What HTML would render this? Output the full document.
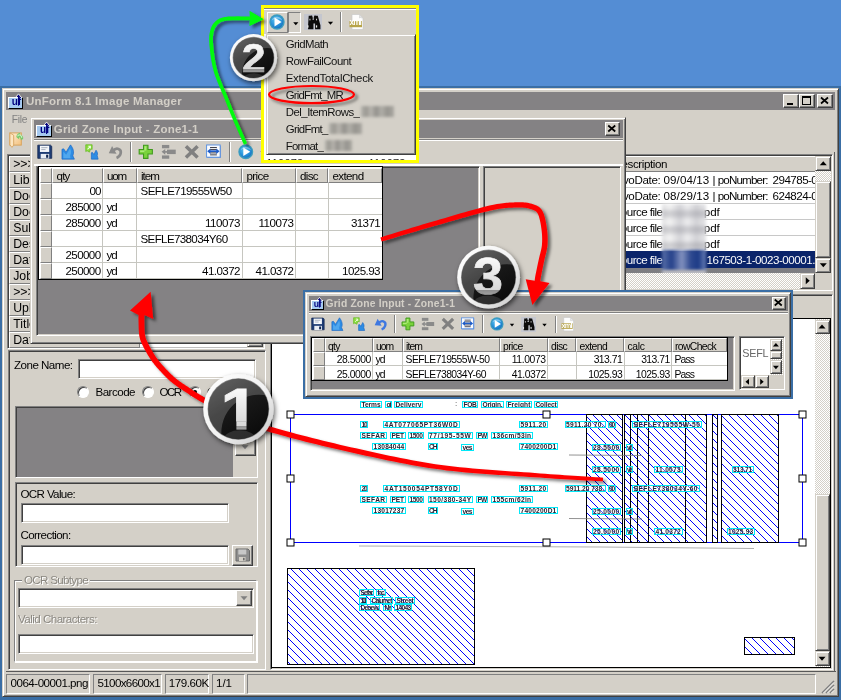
<!DOCTYPE html><html><head><meta charset="utf-8"><title>UnForm 8.1 Image Manager</title><style>
*{box-sizing:border-box;margin:0;padding:0}
html,body{width:841px;height:700px;overflow:hidden}
body{background:#548DD4;font-family:"Liberation Sans",sans-serif;font-size:11px;color:#000;position:relative}
.a{position:absolute}
.t{position:absolute;white-space:nowrap;line-height:1;opacity:.99}
.face{background:#D4D0C8}
.win{background:#D4D0C8;border:1px solid;border-color:#D4D0C8 #404040 #404040 #D4D0C8;box-shadow:inset 1px 1px 0 #fff,inset -1px -1px 0 #808080}
.btn{background:#D4D0C8;border:1px solid;border-color:#fff #404040 #404040 #fff;box-shadow:inset -1px -1px 0 #808080}
.sunk{border:1px solid;border-color:#808080 #fff #fff #808080;box-shadow:inset 1px 1px 0 #404040,inset -1px -1px 0 #D4D0C8}
.sunk1{border:1px solid;border-color:#808080 #fff #fff #808080}
.etch{border:1px solid;border-color:#808080 #fff #fff #808080;box-shadow:inset 1px 1px 0 #fff,1px 1px 0 #fff}
.cap{background:#848284}
.hd{background:#D4D0C8;border:1px solid;border-color:#fff #808080 #808080 #fff}
.dith{background-color:#D4D0C8;background-image:linear-gradient(45deg,#fff 25%,transparent 25%,transparent 75%,#fff 75%),linear-gradient(45deg,#fff 25%,transparent 25%,transparent 75%,#fff 75%);background-size:2px 2px;background-position:0 0,1px 1px}
.w{position:absolute;border:1px solid #00e8f8;font-size:6.6px;line-height:5px;height:7px;white-space:nowrap;overflow:hidden;color:#223;text-align:center;font-weight:bold;background:rgba(255,255,255,.35);opacity:.99}
.blur{position:absolute;filter:blur(1.6px)}
svg{position:absolute;overflow:visible}
</style></head><body><div id="root" style="position:absolute;left:0;top:0;width:841px;height:700px">
<svg width="0" height="0" style="left:0;top:0"><defs><radialGradient id="pg" cx=".4" cy=".35" r=".75"><stop offset="0" stop-color="#5CC4F0"/><stop offset=".6" stop-color="#2590D8"/><stop offset="1" stop-color="#1668B8"/></radialGradient></defs></svg>
<div class="a " style="left:0px;top:86px;width:841px;height:614px;background:#3A6EA5;"></div>
<div class="a win" style="left:2px;top:88px;width:837px;height:609px;"></div>
<div class="a cap" style="left:6px;top:92px;width:829px;height:18px;"></div>
<div class="a " style="left:8.1px;top:97.1px;width:15.4px;height:11.5px;background:#A6CAF0;border:1px solid;border-color:#fff #000 #000 #fff;"></div>
<div class="t" style="left:11.8px;top:97.13px;font-size:10px;letter-spacing:-0.07px;font-weight:bold;color:#000080;">uf</div>
<svg style="left:0;top:0" width="841" height="700"><path d="M15.5,97.6 L18.5,93.9 L21.5,97.6" fill="none" stroke="#fff" stroke-width="0.9"/><path d="M18.5,105.7 V95.9" stroke="#000080" stroke-width="1.1"/><polygon points="16.7,96.9 20.3,96.9 18.5,94.5" fill="#000080"/></svg>
<div class="t" style="left:26px;top:95.87px;font-size:11.5px;letter-spacing:0.24px;font-weight:bold;color:#D4D0C8;">UnForm 8.1 Image Manager</div>
<div class="a btn" style="left:783px;top:94px;width:16px;height:14px;"></div>
<div class="a " style="left:787px;top:103px;width:6px;height:2px;background:#000;"></div>
<div class="a btn" style="left:799px;top:94px;width:16px;height:14px;"></div>
<div class="a " style="left:802px;top:96px;width:9px;height:9px;border:1px solid #000;border-top-width:2px;"></div>
<div class="a btn" style="left:817px;top:94px;width:16px;height:14px;"></div>
<svg style="left:0;top:0" width="841" height="700"><path d="M821,97.5 l7,6 M828,97.5 l-7,6" stroke="#000" stroke-width="1.7"/></svg>
<div class="t" style="left:11.8px;top:115.47px;font-size:10.2px;letter-spacing:-0.26px;color:#808080;">File</div>
<svg style="left:9.4px;top:132.4px" width="16" height="17" viewBox="0 0 16 17"><defs><linearGradient id="fg" x1="0" y1="0" x2="1" y2="1"><stop offset="0" stop-color="#FFF1DA"/><stop offset="1" stop-color="#F3C07C"/></linearGradient></defs><rect x="0.9" y="0.9" width="11.4" height="12.2" fill="url(#fg)" stroke="#D7A35C" stroke-width="1"/><path d="M0.9,0.9 L0.9,12.9 L3,15.4 L4.7,13.1 L4.7,3.2 L3.1,2.2 Z" fill="#FCE6C2" stroke="#D7A35C" stroke-width=".9"/><path d="M7.3,4.9 C7.6,2 10,0.9 11.3,0.7 L11,2.4 C13.2,2.9 14.8,4.9 14.1,6.9 L11.7,8.3 C11.9,6.7 11.2,5.4 10,5.3 L10.3,7.6 Z" fill="#79C96A"/><path d="M8.6,4.4 C9.2,3 10.4,2.6 11.4,3.2 C12.4,3.8 12.9,4.9 12.7,5.9" fill="none" stroke="#C9F0C0" stroke-width="1.1"/></svg>
<div class="a sunk" style="left:7px;top:154px;width:258px;height:195px;background:#fff;overflow:hidden;"></div>
<div class="a hd" style="left:9px;top:156px;width:131px;height:16px;"></div>
<div class="a " style="left:140px;top:171px;width:107px;height:1px;background:#C0C0C0;"></div>
<div class="t" style="left:13.2px;top:158.39px;font-size:12.3px;">&gt;&gt;&gt;</div>
<div class="a hd" style="left:9px;top:172px;width:131px;height:16px;"></div>
<div class="a " style="left:140px;top:187px;width:107px;height:1px;background:#C0C0C0;"></div>
<div class="t" style="left:13.2px;top:174.39px;font-size:12.3px;">Libr</div>
<div class="a hd" style="left:9px;top:188px;width:131px;height:16px;"></div>
<div class="a " style="left:140px;top:203px;width:107px;height:1px;background:#C0C0C0;"></div>
<div class="t" style="left:13.2px;top:190.39px;font-size:12.3px;">Doc</div>
<div class="a hd" style="left:9px;top:204px;width:131px;height:16px;"></div>
<div class="a " style="left:140px;top:219px;width:107px;height:1px;background:#C0C0C0;"></div>
<div class="t" style="left:13.2px;top:206.39px;font-size:12.3px;">Doc</div>
<div class="a hd" style="left:9px;top:220px;width:131px;height:16px;"></div>
<div class="a " style="left:140px;top:235px;width:107px;height:1px;background:#C0C0C0;"></div>
<div class="t" style="left:13.2px;top:222.39px;font-size:12.3px;">Sub</div>
<div class="a hd" style="left:9px;top:236px;width:131px;height:16px;"></div>
<div class="a " style="left:140px;top:251px;width:107px;height:1px;background:#C0C0C0;"></div>
<div class="t" style="left:13.2px;top:238.39px;font-size:12.3px;">Des</div>
<div class="a hd" style="left:9px;top:252px;width:131px;height:16px;"></div>
<div class="a " style="left:140px;top:267px;width:107px;height:1px;background:#C0C0C0;"></div>
<div class="t" style="left:13.2px;top:254.39px;font-size:12.3px;">Dat</div>
<div class="a hd" style="left:9px;top:268px;width:131px;height:16px;"></div>
<div class="a " style="left:140px;top:283px;width:107px;height:1px;background:#C0C0C0;"></div>
<div class="t" style="left:13.2px;top:270.39px;font-size:12.3px;">Job</div>
<div class="a hd" style="left:9px;top:284px;width:131px;height:16px;"></div>
<div class="a " style="left:140px;top:299px;width:107px;height:1px;background:#C0C0C0;"></div>
<div class="t" style="left:13.2px;top:286.39px;font-size:12.3px;">&gt;&gt;&gt;</div>
<div class="a hd" style="left:9px;top:300px;width:131px;height:16px;"></div>
<div class="a " style="left:140px;top:315px;width:107px;height:1px;background:#C0C0C0;"></div>
<div class="t" style="left:13.2px;top:302.39px;font-size:12.3px;">Upl</div>
<div class="a hd" style="left:9px;top:316px;width:131px;height:16px;"></div>
<div class="a " style="left:140px;top:331px;width:107px;height:1px;background:#C0C0C0;"></div>
<div class="t" style="left:13.2px;top:318.39px;font-size:12.3px;">Title</div>
<div class="a hd" style="left:9px;top:332px;width:131px;height:16px;"></div>
<div class="a " style="left:140px;top:347px;width:107px;height:1px;background:#C0C0C0;"></div>
<div class="t" style="left:13.2px;top:334.39px;font-size:12.3px;">Dat</div>
<div class="a dith" style="left:247px;top:156px;width:16px;height:191px;"></div>
<div class="a win" style="left:247px;top:331px;width:16px;height:16px;"></div>
<svg class="a" style="left:0;top:0" width="841" height="700"><polygon points="251.5,337.25 258.5,337.25 255,341.25" fill="#000"/></svg>
<div class="a sunk" style="left:560px;top:154px;width:273px;height:137px;background:#fff;"></div>
<div class="a hd" style="left:562px;top:156px;width:254px;height:15.5px;"></div>
<div class="t" style="left:613.5px;top:157.98px;font-size:11.6px;letter-spacing:-0.41px;">Description</div>
<div class="a " style="left:562px;top:186.5px;width:254px;height:1px;background:#C8C8C8;"></div>
<div class="a " style="left:562px;top:202.5px;width:254px;height:1px;background:#C8C8C8;"></div>
<div class="a " style="left:562px;top:218.5px;width:254px;height:1px;background:#C8C8C8;"></div>
<div class="a " style="left:562px;top:234.5px;width:254px;height:1px;background:#C8C8C8;"></div>
<div class="a " style="left:562px;top:250.5px;width:254px;height:1px;background:#C8C8C8;"></div>
<div class="a " style="left:562px;top:266.5px;width:254px;height:1px;background:#C8C8C8;"></div>
<div class="a " style="left:562px;top:251px;width:254px;height:17px;background:#0A246A;"></div>
<div class="a " style="left:562px;top:268px;width:254px;height:4.5px;background:#7E7E82;"></div>
<div class="a" style="left:562px;top:171px;width:253.4px;height:100px;overflow:hidden">
<div class="t" style="left:60.9px;top:2.78px;font-size:11.6px;letter-spacing:-0.35px;">voDate:</div>
<div class="t" style="left:101.6px;top:2.78px;font-size:11.6px;letter-spacing:0.06px;">09/04/13</div>
<div class="t" style="left:150.6px;top:2.78px;font-size:11.6px;">|</div>
<div class="t" style="left:155.7px;top:2.78px;font-size:11.6px;letter-spacing:-0.82px;">poNumber:</div>
<div class="t" style="left:210.6px;top:2.78px;font-size:11.6px;letter-spacing:-0.54px;">294785-01</div>
<div class="t" style="left:60.9px;top:18.78px;font-size:11.6px;letter-spacing:-0.35px;">voDate:</div>
<div class="t" style="left:101.6px;top:18.78px;font-size:11.6px;letter-spacing:0.06px;">08/29/13</div>
<div class="t" style="left:150.6px;top:18.78px;font-size:11.6px;">|</div>
<div class="t" style="left:155.7px;top:18.78px;font-size:11.6px;letter-spacing:-0.82px;">poNumber:</div>
<div class="t" style="left:210.6px;top:18.78px;font-size:11.6px;letter-spacing:-0.54px;">624824-01</div>
<div class="t" style="left:58.8px;top:34.78px;font-size:11.6px;letter-spacing:-0.53px;">ource file</div>
<div class="t" style="left:138.5px;top:34.78px;font-size:11.6px;">.pdf</div>
<div class="t" style="left:58.8px;top:50.78px;font-size:11.6px;letter-spacing:-0.53px;">ource file</div>
<div class="t" style="left:138.5px;top:50.78px;font-size:11.6px;">.pdf</div>
<div class="t" style="left:58.8px;top:66.78px;font-size:11.6px;letter-spacing:-0.53px;">ource file</div>
<div class="t" style="left:138.5px;top:66.78px;font-size:11.6px;">.pdf</div>
<div class="t" style="left:58.8px;top:82.78px;font-size:11.6px;letter-spacing:-0.53px;color:#fff;">ource file</div>
<div class="t" style="left:144.5px;top:82.78px;font-size:11.6px;letter-spacing:-0.48px;color:#fff;">167503-1-0023-00001.pdf</div>
</div>
<div class="blur" style="left:661.5px;top:204px;width:44px;height:47px;background:repeating-linear-gradient(180deg,rgba(255,255,255,.0) 0,rgba(255,255,255,.0) 4px,rgba(120,120,130,.28) 8px,rgba(120,120,130,.28) 11px,rgba(255,255,255,0) 16px),linear-gradient(90deg,#e2e2e4,#f2f2f2 18%,#d4d4d8 40%,#ececee 58%,#d2d2d6 78%,#e6e6e8)"></div>
<div class="blur" style="left:661.5px;top:250px;width:44px;height:21px;background:linear-gradient(90deg,#5a70a8,#24408a 22%,#8392bf 45%,#2f4a90 65%,#1c3a86 82%,#6a7fb5)"></div>
<div class="blur" style="left:661.5px;top:270px;width:44px;height:5px;background:#bcbcc2"></div>
<div class="a dith" style="left:815.4px;top:156px;width:15.8px;height:116.5px;"></div>
<div class="a win" style="left:815.4px;top:156px;width:15.8px;height:15px;"></div>
<svg class="a" style="left:0;top:0" width="841" height="700"><polygon points="819.8,165.25 826.8,165.25 823.3,161.25" fill="#000"/></svg>
<div class="a win" style="left:815.4px;top:181px;width:15.8px;height:76.5px;"></div>
<div class="a win" style="left:815.4px;top:257.5px;width:15.8px;height:15px;"></div>
<svg class="a" style="left:0;top:0" width="841" height="700"><polygon points="819.8,263.25 826.8,263.25 823.3,267.25" fill="#000"/></svg>
<div class="a dith" style="left:562px;top:272.5px;width:238px;height:16.5px;"></div>
<div class="a win" style="left:800px;top:272.5px;width:15px;height:16.5px;"></div>
<svg class="a" style="left:0;top:0" width="841" height="700"><polygon points="805.75,277.25 805.75,284.25 809.75,280.75" fill="#000"/></svg>
<div class="a face" style="left:815px;top:272.5px;width:16px;height:16.5px;"></div>
<div class="a sunk" style="left:8px;top:350px;width:258px;height:320px;background:#D4D0C8;"></div>
<div class="t" style="left:14px;top:359.48px;font-size:11.6px;letter-spacing:-0.53px;">Zone Name:</div>
<div class="a sunk" style="left:77.5px;top:359px;width:178px;height:20px;background:#fff;"></div>
<div class="a" style="left:77px;top:386px;width:12px;height:12px;border-radius:50%;background:#fff;border:1px solid;border-color:#808080 #fff #fff #808080;box-shadow:inset 1px 1px 0 #404040"></div>
<div class="a" style="left:141.5px;top:386px;width:12px;height:12px;border-radius:50%;background:#fff;border:1px solid;border-color:#808080 #fff #fff #808080;box-shadow:inset 1px 1px 0 #404040"></div>
<div class="a" style="left:189px;top:385.5px;width:12px;height:12px;border-radius:50%;background:#fff;border:1px solid;border-color:#808080 #fff #fff #808080;box-shadow:inset 1px 1px 0 #404040"></div>
<div class="a " style="left:193px;top:389.5px;width:4px;height:4px;background:#000;border-radius:50%;"></div>
<div class="t" style="left:95.5px;top:385.98px;font-size:11.6px;letter-spacing:-0.53px;">Barcode</div>
<div class="t" style="left:159.5px;top:385.98px;font-size:11.6px;letter-spacing:-1.59px;">OCR</div>
<div class="t" style="left:207px;top:385.98px;font-size:11.6px;">Grid</div>
<div class="a sunk" style="left:15px;top:406px;width:243px;height:72px;background:#D4D0C8;"></div>
<div class="a " style="left:17px;top:408px;width:215.5px;height:68.5px;background:#848284;"></div>
<div class="a btn" style="left:234.5px;top:437.5px;width:21px;height:18px;"></div>
<svg style="left:0;top:0" width="841" height="700"><polygon points="241.5,445.25 248.5,445.25 245,449.25" fill="#808080"/></svg>
<div class="a sunk" style="left:15px;top:482px;width:243px;height:85px;"></div>
<div class="t" style="left:20.5px;top:487.98px;font-size:11.6px;letter-spacing:-0.65px;">OCR Value:</div>
<div class="a sunk" style="left:20.5px;top:503px;width:208.5px;height:20px;background:#fff;"></div>
<div class="t" style="left:20.5px;top:528.98px;font-size:11.6px;letter-spacing:-0.61px;">Correction:</div>
<div class="a sunk" style="left:20.5px;top:545px;width:208.5px;height:20px;background:#fff;"></div>
<div class="a btn" style="left:232px;top:544.5px;width:21px;height:21px;"></div>
<svg style="left:235px;top:548px" width="15" height="14" viewBox="0 0 15 14"><path d="M1,1 h12 l1.5,1.5 v10.5 h-13.5z" fill="#8E8E8E" stroke="#6b6b6b" stroke-width="1"/><rect x="3.3" y="1.5" width="8" height="5" fill="#C8C8C8"/><rect x="4" y="9" width="6.5" height="4" fill="#D4D0C8"/><rect x="8" y="9.8" width="1.6" height="2.6" fill="#6b6b6b"/></svg>
<div class="a etch" style="left:14.2px;top:580px;width:243.3px;height:82px;"></div>
<div class="a face" style="left:22px;top:574px;width:68px;height:12px;"></div>
<div class="t" style="left:24px;top:574.48px;font-size:11.6px;letter-spacing:-0.69px;color:#8A8780;text-shadow:1px 1px 0 #fff;">OCR Subtype</div>
<div class="a sunk" style="left:18px;top:588px;width:236px;height:19.5px;background:#fff;"></div>
<div class="a btn" style="left:236px;top:590px;width:16px;height:15.5px;"></div>
<svg style="left:0;top:0" width="841" height="700"><polygon points="240.5,596.25 247.5,596.25 244,600.25" fill="#808080"/></svg>
<div class="t" style="left:18px;top:612.98px;font-size:11.6px;letter-spacing:-0.54px;color:#8A8780;text-shadow:1px 1px 0 #fff;">Valid Characters:</div>
<div class="a sunk" style="left:18px;top:634px;width:236px;height:19.5px;background:#fff;"></div>
<div class="a " style="left:6px;top:670.5px;width:830px;height:1.4px;background:#585858;"></div>
<div class="a " style="left:833.9px;top:152.3px;width:1.6px;height:519.6px;background:#606060;"></div>
<div class="a sunk1" style="left:6px;top:674px;width:84px;height:19.5px;"></div>
<div class="a sunk1" style="left:93px;top:674px;width:69px;height:19.5px;"></div>
<div class="a sunk1" style="left:164.5px;top:674px;width:44.5px;height:19.5px;"></div>
<div class="a sunk1" style="left:211.5px;top:674px;width:33.5px;height:19.5px;"></div>
<div class="a sunk1" style="left:247px;top:674px;width:569px;height:19.5px;"></div>
<div class="t" style="left:10.5px;top:677.38px;font-size:11.6px;letter-spacing:-0.5px;">0064-00001.png</div>
<div class="t" style="left:97.5px;top:677.38px;font-size:11.6px;letter-spacing:-0.65px;">5100x6600x1</div>
<div class="t" style="left:168.8px;top:677.38px;font-size:11.6px;letter-spacing:-0.46px;">179.60K</div>
<div class="t" style="left:216px;top:677.38px;font-size:11.6px;letter-spacing:-0.04px;">1/1</div>
<svg style="left:821px;top:680px" width="14" height="14"><path d="M1,13 L13,1 M5,13 L13,5 M9,13 L13,9" stroke="#808080" stroke-width="1.6"/><path d="M2.4,13 L13,2.4 M6.4,13 L13,6.4 M10.4,13 L13,10.4" stroke="#fff" stroke-width=".8"/></svg>
<div class="a sunk" style="left:270px;top:294px;width:563px;height:375.5px;background:#D4D0C8;"></div>
<div class="a " style="left:271px;top:318px;width:560px;height:350px;background:#fff;border:1px solid #000;border-left-width:1.5px;"></div>
<div class="a dith" style="left:814.5px;top:319px;width:15.5px;height:348px;"></div>
<div class="a win" style="left:814.5px;top:319.5px;width:15px;height:14.5px;"></div>
<svg class="a" style="left:0;top:0" width="841" height="700"><polygon points="818.5,328.5 825.5,328.5 822,324.5" fill="#000"/></svg>
<div class="a win" style="left:814.5px;top:494px;width:15px;height:157px;"></div>
<div class="a win" style="left:814.5px;top:651px;width:15px;height:15px;"></div>
<svg class="a" style="left:0;top:0" width="841" height="700"><polygon points="818.5,656.75 825.5,656.75 822,660.75" fill="#000"/></svg>
<svg style="left:0;top:0" width="841" height="700"><defs><pattern id="hat" width="8" height="8" patternUnits="userSpaceOnUse"><g shape-rendering="crispEdges" fill="#0000ff"><rect x="2" y="0" width="1" height="1"/><rect x="3" y="1" width="1" height="1"/><rect x="4" y="2" width="1" height="1"/><rect x="5" y="3" width="1" height="1"/><rect x="6" y="4" width="1" height="1"/><rect x="7" y="5" width="1" height="1"/><rect x="0" y="6" width="1" height="1"/><rect x="1" y="7" width="1" height="1"/></g></pattern></defs><rect x="290.5" y="414.5" width="512" height="128" fill="none" stroke="#0000ff" stroke-width="1"/><rect x="586.5" y="414.5" width="36" height="128" fill="url(#hat)" stroke="#000" stroke-width="1" shape-rendering="crispEdges"/><rect x="624.5" y="414.5" width="6" height="128" fill="url(#hat)" stroke="#000" stroke-width="1" shape-rendering="crispEdges"/><rect x="630.5" y="414.5" width="7" height="128" fill="url(#hat)" stroke="#000" stroke-width="1" shape-rendering="crispEdges"/><rect x="637.5" y="414.5" width="11" height="128" fill="url(#hat)" stroke="#000" stroke-width="1" shape-rendering="crispEdges"/><rect x="648.5" y="414.5" width="37" height="128" fill="url(#hat)" stroke="#000" stroke-width="1" shape-rendering="crispEdges"/><rect x="685.5" y="414.5" width="21" height="128" fill="url(#hat)" stroke="#000" stroke-width="1" shape-rendering="crispEdges"/><rect x="712.5" y="414.5" width="5" height="128" fill="url(#hat)" stroke="#000" stroke-width="1" shape-rendering="crispEdges"/><rect x="721.5" y="414.5" width="57" height="128" fill="url(#hat)" stroke="#000" stroke-width="1" shape-rendering="crispEdges"/><path d="M569,455 L642,455.5 M569,518.5 L642,519" stroke="#777" stroke-width=".8"/><path d="M359,546 L600,547 L754,548.5" stroke="#999" stroke-width=".8" fill="none"/><rect x="287.5" y="568.5" width="187" height="96" fill="url(#hat)" stroke="#000" stroke-width="1"/><rect x="744.5" y="637.5" width="50" height="17" fill="url(#hat)" stroke="#000" stroke-width="1"/><rect x="287" y="411" width="7" height="7" fill="#fff" stroke="#000" stroke-width="1"/><rect x="287" y="475" width="7" height="7" fill="#fff" stroke="#000" stroke-width="1"/><rect x="287" y="539" width="7" height="7" fill="#fff" stroke="#000" stroke-width="1"/><rect x="543" y="411" width="7" height="7" fill="#fff" stroke="#000" stroke-width="1"/><rect x="543" y="539" width="7" height="7" fill="#fff" stroke="#000" stroke-width="1"/><rect x="799" y="411" width="7" height="7" fill="#fff" stroke="#000" stroke-width="1"/><rect x="799" y="475" width="7" height="7" fill="#fff" stroke="#000" stroke-width="1"/><rect x="799" y="539" width="7" height="7" fill="#fff" stroke="#000" stroke-width="1"/></svg>
<div class="w" style="left:360px;top:400.5px;width:22px;letter-spacing:-0.06px">Terms</div>
<div class="w" style="left:385px;top:400.5px;width:7px;letter-spacing:-1.11px">of</div>
<div class="w" style="left:394px;top:400.5px;width:29px;letter-spacing:0.04px">Delivery</div>
<div class="t" style="left:455px;top:400.03px;font-size:8px;color:#333;">:</div>
<div class="w" style="left:462px;top:400.5px;width:16px;letter-spacing:-0.31px">FOB</div>
<div class="w" style="left:481px;top:400.5px;width:23px;letter-spacing:-0.18px">Origin,</div>
<div class="w" style="left:506px;top:400.5px;width:26px;letter-spacing:0.09px">Freight</div>
<div class="w" style="left:534px;top:400.5px;width:24px;letter-spacing:-0.14px">Collect</div>
<div class="w" style="left:360px;top:420.5px;width:8px;letter-spacing:-1.17px">10</div>
<div class="w" style="left:383px;top:420.5px;width:77px;letter-spacing:0.6px">4AT077065PT36W0D</div>
<div class="w" style="left:519px;top:420.5px;width:29px;letter-spacing:0.36px">5911.20</div>
<div class="w" style="left:360px;top:431.5px;width:27px;letter-spacing:0.4px">SEFAR</div>
<div class="w" style="left:390px;top:431.5px;width:15.5px;letter-spacing:-0.11px">PET</div>
<div class="w" style="left:408px;top:431.5px;width:16px;letter-spacing:-0.42px">1500</div>
<div class="w" style="left:427.5px;top:431.5px;width:45.5px;letter-spacing:0.65px">77/195-55W</div>
<div class="w" style="left:476px;top:431.5px;width:12px;letter-spacing:-0.82px">PW</div>
<div class="w" style="left:491px;top:431.5px;width:42px;letter-spacing:0.34px">136cm/53in</div>
<div class="w" style="left:372px;top:442.5px;width:34px;letter-spacing:0.2px">13084044</div>
<div class="w" style="left:427.5px;top:442.5px;width:10.5px;letter-spacing:-1.02px">CH</div>
<div class="w" style="left:461px;top:443.5px;width:12.5px;letter-spacing:-0.5px">yes</div>
<div class="w" style="left:519px;top:442.5px;width:39px;letter-spacing:0.21px">7400200D1</div>
<div class="w" style="left:564.5px;top:421px;width:41px;letter-spacing:0.32px">5911.20 70.</div>
<div class="w" style="left:607.5px;top:421px;width:8.2px;letter-spacing:-1.07px">00</div>
<div class="w" style="left:632px;top:421px;width:70px;letter-spacing:0.54px">SEFLE719555W-50</div>
<div class="w" style="left:591.5px;top:443.5px;width:29.5px;letter-spacing:0.38px">28.5000</div>
<div class="w" style="left:625.5px;top:443.5px;width:7.5px;letter-spacing:-1.6px">yd</div>
<div class="w" style="left:591.5px;top:465.5px;width:29.5px;letter-spacing:0.38px">28.5000</div>
<div class="w" style="left:625.5px;top:465.5px;width:7.5px;letter-spacing:-1.6px">yd</div>
<div class="w" style="left:654px;top:465.5px;width:28.5px;letter-spacing:0.29px">11.0073</div>
<div class="w" style="left:731.5px;top:465.5px;width:22px;letter-spacing:-0.2px">313.71</div>
<div class="w" style="left:360px;top:484.5px;width:8px;letter-spacing:-1.17px">20</div>
<div class="w" style="left:383px;top:484.5px;width:77px;letter-spacing:0.71px">4AT150054PT58Y0D</div>
<div class="w" style="left:519px;top:484.5px;width:29px;letter-spacing:0.36px">5911.20</div>
<div class="w" style="left:360px;top:495.5px;width:27px;letter-spacing:0.4px">SEFAR</div>
<div class="w" style="left:390px;top:495.5px;width:15.5px;letter-spacing:-0.11px">PET</div>
<div class="w" style="left:408px;top:495.5px;width:16px;letter-spacing:-0.42px">1500</div>
<div class="w" style="left:427.5px;top:495.5px;width:45.5px;letter-spacing:0.43px">150/380-34Y</div>
<div class="w" style="left:476px;top:495.5px;width:12px;letter-spacing:-0.82px">PW</div>
<div class="w" style="left:491px;top:495.5px;width:42px;letter-spacing:0.34px">155cm/62in</div>
<div class="w" style="left:372px;top:506.5px;width:34px;letter-spacing:0.2px">13017237</div>
<div class="w" style="left:427.5px;top:506.5px;width:10.5px;letter-spacing:-1.02px">CH</div>
<div class="w" style="left:461px;top:507.5px;width:12.5px;letter-spacing:-0.5px">yes</div>
<div class="w" style="left:519px;top:506.5px;width:39px;letter-spacing:0.21px">7400200D1</div>
<div class="w" style="left:564.5px;top:485px;width:41px;letter-spacing:-0.01px">5911.20 738.</div>
<div class="w" style="left:607.5px;top:485px;width:8.2px;letter-spacing:-1.07px">00</div>
<div class="w" style="left:632px;top:485px;width:67.5px;letter-spacing:0.51px">SEFLE738034Y-60</div>
<div class="w" style="left:591.5px;top:507.5px;width:29.5px;letter-spacing:0.38px">25.0000</div>
<div class="w" style="left:625.5px;top:507.5px;width:7.5px;letter-spacing:-1.6px">yd</div>
<div class="w" style="left:591.5px;top:527.5px;width:29.5px;letter-spacing:0.38px">25.0000</div>
<div class="w" style="left:625.5px;top:527.5px;width:7.5px;letter-spacing:-1.6px">yd</div>
<div class="w" style="left:654px;top:527.5px;width:28.5px;letter-spacing:0.23px">41.0372</div>
<div class="w" style="left:726.5px;top:527.5px;width:28.5px;letter-spacing:0.23px">1025.93</div>
<div class="w" style="left:359px;top:588.5px;width:15px;letter-spacing:-0.9px">Sefar</div>
<div class="w" style="left:376px;top:588.5px;width:9.5px;letter-spacing:-1.22px">Inc.</div>
<div class="w" style="left:359px;top:596.5px;width:8px;letter-spacing:-1.76px">111</div>
<div class="w" style="left:370px;top:596.5px;width:23px;letter-spacing:-0.86px">Calumet</div>
<div class="w" style="left:395px;top:596.5px;width:20px;letter-spacing:-0.28px">Street</div>
<div class="w" style="left:359px;top:604px;width:21px;letter-spacing:-0.81px">Depew,</div>
<div class="w" style="left:383px;top:604px;width:9px;letter-spacing:-1.58px">NY</div>
<div class="w" style="left:394px;top:604px;width:18px;letter-spacing:-0.67px">14043</div>
<div class="a win" style="left:30px;top:117px;width:596px;height:226.5px;"></div>
<div class="a cap" style="left:34px;top:120px;width:589px;height:18px;"></div>
<div class="a " style="left:36.2px;top:125.3px;width:15.4px;height:11.5px;background:#A6CAF0;border:1px solid;border-color:#fff #000 #000 #fff;"></div>
<div class="t" style="left:39.9px;top:125.33px;font-size:10px;letter-spacing:-0.07px;font-weight:bold;color:#000080;">uf</div>
<svg style="left:0;top:0" width="841" height="700"><path d="M43.6,125.8 L46.6,122.1 L49.6,125.8" fill="none" stroke="#fff" stroke-width="0.9"/><path d="M46.6,133.9 V124.1" stroke="#000080" stroke-width="1.1"/><polygon points="44.8,125.1 48.4,125.1 46.6,122.7" fill="#000080"/></svg>
<div class="t" style="left:53.8px;top:123.87px;font-size:11.5px;letter-spacing:0.2px;font-weight:bold;color:#D4D0C8;">Grid Zone Input - Zone1-1</div>
<div class="a btn" style="left:604.5px;top:122px;width:15.5px;height:14px;"></div>
<svg style="left:0;top:0" width="841" height="700"><path d="M608.25,125.5 l7,6 M615.25,125.5 l-7,6" stroke="#000" stroke-width="1.7"/></svg>
<div class="a " style="left:34px;top:139px;width:589px;height:2px;border-top:1px solid #808080;border-bottom:1px solid #fff;"></div>
<svg style="left:37px;top:144px" width="15.52" height="15.52" viewBox="0 0 16 16"><path d="M0.8,1.2 h13.2 l1.2,1.2 v12.4 h-14.4z" fill="#1E3C74" stroke="#122650" stroke-width=".8"/><rect x="3" y="1.8" width="9.6" height="6.4" fill="#F6F8FB"/><path d="M4.4,3.8 h6.4 M4.4,5.8 h4.4" stroke="#A4ACBC" stroke-width="1"/><rect x="3.8" y="10.2" width="8.8" height="4.8" fill="#E9EDF4"/><rect x="9.4" y="11" width="2.2" height="3.2" fill="#122650"/></svg>
<svg style="left:60.5px;top:144px" width="15.52" height="15.52" viewBox="0 0 16 16"><path d="M1,15.6 L1,5.4 L2.8,5 L5.2,8.4 L9.8,0.9 C12.8,4.6 13.8,8.6 12.2,12.2 L13.8,15.6 Z" fill="#2D8CE4" stroke="#1A66C4" stroke-width=".7"/><path d="M2.4,14.6 L2.4,8 L5.4,11 L9.4,4.4 C10.6,7 10.6,9.6 9.4,12 L9.8,14.6Z" fill="#6EBEF6" opacity=".55"/></svg>
<svg style="left:84px;top:144px" width="15.52" height="15.52" viewBox="0 0 16 16"><path d="M1.8,0.8 h6.6 v4.8 l-1.6,-.6 l-1.2,3.4 l-2.4,-1.4 l-1.4,.8z" fill="#8ADB3E" stroke="#62B81E" stroke-width=".7"/><path d="M3.6,5.6 L6.4,2.8 M4.4,2.4 h2.2 v2.2" stroke="#EFFFE0" stroke-width="1.1" fill="none"/><path d="M7.6,15.6 L7.6,9 L8.8,8.8 L10.2,10.8 L12.4,6.4 C13.8,8.2 14.4,10 13.6,12 L14.6,15.6 Z" fill="#2D8CE4" stroke="#1A66C4" stroke-width=".7"/></svg>
<svg style="left:108px;top:144px" width="15.52" height="15.52" viewBox="0 0 16 16"><path d="M5.4,7.2 C8.4,2.8 14.4,5 13,10 C12.4,12.2 10.8,13.6 8.8,14.4" fill="none" stroke="#8A8A8A" stroke-width="2.7"/><polygon points="0.8,9.6 8.8,10 4.2,2" fill="#8A8A8A"/></svg>
<svg style="left:138px;top:144px" width="15.52" height="15.52" viewBox="0 0 16 16"><path d="M5.7,1.2 h4.6 v4.5 h4.5 v4.6 h-4.5 v4.5 h-4.6 v-4.5 h-4.5 v-4.6 h4.5z" fill="#7AD23C" stroke="#3F9A1C" stroke-width="1.1"/><path d="M6.6,2.2 h2 v4.4 h-2z M2.2,6.6 h4.4 v1.6 h-4.4z" fill="#B8F088" opacity=".8"/></svg>
<svg style="left:161px;top:144px" width="15.52" height="15.52" viewBox="0 0 16 16"><rect x="1" y="1" width="7.5" height="3.4" fill="#8A8A8A"/><rect x="1" y="11.8" width="7.5" height="3.4" fill="#8A8A8A"/><rect x="6.2" y="5.8" width="9" height="4.6" fill="#8A8A8A"/><polygon points="0.6,8.1 4.4,5.2 4.4,11" fill="#8A8A8A"/><rect x="4" y="7.3" width="3" height="1.7" fill="#8A8A8A"/></svg>
<svg style="left:183.5px;top:144px" width="15.52" height="15.52" viewBox="0 0 16 16"><path d="M2,2.2 L14,13.8 M14,2.2 L2,13.8" stroke="#808080" stroke-width="3.6" stroke-linecap="butt"/></svg>
<svg style="left:205.7px;top:144px" width="15.52" height="15.52" viewBox="0 0 16 16"><rect x="1.2" y="1.6" width="14" height="12.6" fill="#4C82D6"/><rect x="0.6" y="1" width="14" height="12.6" fill="#FAFCFF" stroke="#5A90E0" stroke-width="1"/><path d="M4.2,3.6 h7 M4.2,5.6 h7 M4.2,9.2 h7 M4.2,11.2 h7" stroke="#3a3a44" stroke-width="1"/><path d="M3,7.4 h9.2" stroke="#1E5CC8" stroke-width="1.8"/><polygon points="1.2,7.4 4.6,4.6 4.6,10.2" fill="#1E5CC8"/><polygon points="14,7.4 10.6,4.6 10.6,10.2" fill="#1E5CC8"/></svg>
<svg style="left:238px;top:144px" width="15.52" height="15.52" viewBox="0 0 16 16"><circle cx="8" cy="8" r="7.7" fill="#3C9CBE"/><circle cx="8" cy="8" r="6.3" fill="url(#pg)"/><path d="M2.6,6.4 A5.8,5.8 0 0 1 13.4,6.4 A9,9 0 0 0 2.6,6.4Z" fill="#fff" opacity=".35"/><polygon points="5.5,3.6 12.6,8 5.5,12.4" fill="#fff"/></svg>
<div class="a " style="left:130px;top:142px;width:2px;height:20px;border-left:1px solid #808080;border-right:1px solid #fff;"></div>
<div class="a " style="left:229.4px;top:142px;width:2px;height:20px;border-left:1px solid #808080;border-right:1px solid #fff;"></div>
<svg style="left:0;top:0" width="841" height="700"><polygon points="260.5,151.25 265.5,151.25 263,154.25" fill="#000"/></svg>
<div class="a " style="left:34px;top:164px;width:589px;height:1.7px;background:#fff;"></div>
<div class="a sunk" style="left:35.5px;top:165.5px;width:444.5px;height:170.5px;background:#848284;"></div>
<div class="a sunk" style="left:482.8px;top:166px;width:138.7px;height:170px;background:#D4D0C8;"></div>
<div class="a " style="left:37.5px;top:166px;width:345.5px;height:114px;background:#fff;border:solid #000;border-width:1.5px 1px 1px 1.5px;"></div>
<div class="a hd" style="left:39.5px;top:167.5px;width:12.5px;height:15.5px;"></div>
<div class="a hd" style="left:52px;top:167.5px;width:50.5px;height:15.5px;"></div>
<div class="t" style="left:56.5px;top:170.28px;font-size:11.6px;letter-spacing:-0.82px;">qty</div>
<div class="a hd" style="left:102.5px;top:167.5px;width:34px;height:15.5px;"></div>
<div class="t" style="left:107px;top:170.28px;font-size:11.6px;letter-spacing:-1.19px;">uom</div>
<div class="a hd" style="left:136.5px;top:167.5px;width:105.5px;height:15.5px;"></div>
<div class="t" style="left:141px;top:170.28px;font-size:11.6px;letter-spacing:-0.98px;">item</div>
<div class="a hd" style="left:242px;top:167.5px;width:53.5px;height:15.5px;"></div>
<div class="t" style="left:246.5px;top:170.28px;font-size:11.6px;letter-spacing:-0.63px;">price</div>
<div class="a hd" style="left:295.5px;top:167.5px;width:32.5px;height:15.5px;"></div>
<div class="t" style="left:300px;top:170.28px;font-size:11.6px;letter-spacing:-0.66px;">disc</div>
<div class="a hd" style="left:328px;top:167.5px;width:54px;height:15.5px;"></div>
<div class="t" style="left:332.5px;top:170.28px;font-size:11.6px;letter-spacing:-0.64px;">extend</div>
<div class="a hd" style="left:39.5px;top:183px;width:12.5px;height:16px;"></div>
<div class="a " style="left:52px;top:198px;width:330px;height:1px;background:#C6C6C0;"></div>
<div class="t" style="left:89.5px;top:185.28px;font-size:11.6px;letter-spacing:-0.95px;">00</div>
<div class="t" style="left:140.5px;top:185.28px;font-size:11.6px;letter-spacing:-0.59px;">SEFLE719555W50</div>
<div class="a hd" style="left:39.5px;top:199px;width:12.5px;height:16px;"></div>
<div class="a " style="left:52px;top:214px;width:330px;height:1px;background:#C6C6C0;"></div>
<div class="t" style="left:65.5px;top:201.28px;font-size:11.6px;letter-spacing:-0.62px;">285000</div>
<div class="t" style="left:106.5px;top:201.28px;font-size:11.6px;letter-spacing:-1.13px;">yd</div>
<div class="a hd" style="left:39.5px;top:215px;width:12.5px;height:16px;"></div>
<div class="a " style="left:52px;top:230px;width:330px;height:1px;background:#C6C6C0;"></div>
<div class="t" style="left:65.5px;top:217.28px;font-size:11.6px;letter-spacing:-0.62px;">285000</div>
<div class="t" style="left:106.5px;top:217.28px;font-size:11.6px;letter-spacing:-1.13px;">yd</div>
<div class="t" style="left:205px;top:217.28px;font-size:11.6px;letter-spacing:-0.47px;">110073</div>
<div class="t" style="left:258.5px;top:217.28px;font-size:11.6px;letter-spacing:-0.47px;">110073</div>
<div class="t" style="left:351px;top:217.28px;font-size:11.6px;letter-spacing:-0.65px;">31371</div>
<div class="a hd" style="left:39.5px;top:231px;width:12.5px;height:16px;"></div>
<div class="a " style="left:52px;top:246px;width:330px;height:1px;background:#C6C6C0;"></div>
<div class="t" style="left:140.5px;top:233.28px;font-size:11.6px;letter-spacing:-0.65px;">SEFLE738034Y60</div>
<div class="a hd" style="left:39.5px;top:247px;width:12.5px;height:16px;"></div>
<div class="a " style="left:52px;top:262px;width:330px;height:1px;background:#C6C6C0;"></div>
<div class="t" style="left:65.5px;top:249.28px;font-size:11.6px;letter-spacing:-0.62px;">250000</div>
<div class="t" style="left:106.5px;top:249.28px;font-size:11.6px;letter-spacing:-1.13px;">yd</div>
<div class="a hd" style="left:39.5px;top:263px;width:12.5px;height:16px;"></div>
<div class="a " style="left:52px;top:278px;width:330px;height:1px;background:#C6C6C0;"></div>
<div class="t" style="left:65.5px;top:265.28px;font-size:11.6px;letter-spacing:-0.62px;">250000</div>
<div class="t" style="left:106.5px;top:265.28px;font-size:11.6px;letter-spacing:-1.13px;">yd</div>
<div class="t" style="left:202px;top:265.28px;font-size:11.6px;letter-spacing:-0.56px;">41.0372</div>
<div class="t" style="left:255.5px;top:265.28px;font-size:11.6px;letter-spacing:-0.56px;">41.0372</div>
<div class="t" style="left:342px;top:265.28px;font-size:11.6px;letter-spacing:-0.56px;">1025.93</div>
<div class="a " style="left:102px;top:183px;width:1px;height:96px;background:#C6C6C0;"></div>
<div class="a " style="left:136px;top:183px;width:1px;height:96px;background:#C6C6C0;"></div>
<div class="a " style="left:241.5px;top:183px;width:1px;height:96px;background:#C6C6C0;"></div>
<div class="a " style="left:295px;top:183px;width:1px;height:96px;background:#C6C6C0;"></div>
<div class="a " style="left:327.5px;top:183px;width:1px;height:96px;background:#C6C6C0;"></div>
<div class="a " style="left:303px;top:290px;width:490px;height:108.5px;background:#3A6EA5;"></div>
<div class="a win" style="left:305px;top:292px;width:486px;height:104.5px;"></div>
<div class="a cap" style="left:308.5px;top:295.5px;width:479.5px;height:15.5px;"></div>
<div class="a " style="left:310.5px;top:300.2px;width:13.24px;height:9.89px;background:#A6CAF0;border:1px solid;border-color:#fff #000 #000 #fff;"></div>
<div class="t" style="left:313.68px;top:300.2px;font-size:8.6px;letter-spacing:-0.06px;font-weight:bold;color:#000080;">uf</div>
<svg style="left:0;top:0" width="841" height="700"><path d="M316.86,300.63 L319.44,297.45 L322.02,300.63" fill="none" stroke="#fff" stroke-width="0.77"/><path d="M319.44,307.6 V299.17" stroke="#000080" stroke-width="0.95"/><polygon points="317.9,300.03 320.99,300.03 319.44,297.96" fill="#000080"/></svg>
<div class="t" style="left:325.5px;top:299.08px;font-size:10.3px;letter-spacing:0.17px;font-weight:bold;color:#D4D0C8;">Grid Zone Input - Zone1-1</div>
<div class="a btn" style="left:771.5px;top:296.5px;width:14.5px;height:13px;"></div>
<svg style="left:0;top:0" width="841" height="700"><path d="M774.75,299.5 l7,6 M781.75,299.5 l-7,6" stroke="#000" stroke-width="1.7"/></svg>
<div class="a " style="left:308.5px;top:312px;width:479.5px;height:2px;border-top:1px solid #808080;border-bottom:1px solid #fff;"></div>
<svg style="left:310.5px;top:317px" width="13.86" height="13.86" viewBox="0 0 16 16"><path d="M0.8,1.2 h13.2 l1.2,1.2 v12.4 h-14.4z" fill="#1E3C74" stroke="#122650" stroke-width=".8"/><rect x="3" y="1.8" width="9.6" height="6.4" fill="#F6F8FB"/><path d="M4.4,3.8 h6.4 M4.4,5.8 h4.4" stroke="#A4ACBC" stroke-width="1"/><rect x="3.8" y="10.2" width="8.8" height="4.8" fill="#E9EDF4"/><rect x="9.4" y="11" width="2.2" height="3.2" fill="#122650"/></svg>
<svg style="left:331.49px;top:317px" width="13.86" height="13.86" viewBox="0 0 16 16"><path d="M1,15.6 L1,5.4 L2.8,5 L5.2,8.4 L9.8,0.9 C12.8,4.6 13.8,8.6 12.2,12.2 L13.8,15.6 Z" fill="#2D8CE4" stroke="#1A66C4" stroke-width=".7"/><path d="M2.4,14.6 L2.4,8 L5.4,11 L9.4,4.4 C10.6,7 10.6,9.6 9.4,12 L9.8,14.6Z" fill="#6EBEF6" opacity=".55"/></svg>
<svg style="left:352.47px;top:317px" width="13.86" height="13.86" viewBox="0 0 16 16"><path d="M1.8,0.8 h6.6 v4.8 l-1.6,-.6 l-1.2,3.4 l-2.4,-1.4 l-1.4,.8z" fill="#8ADB3E" stroke="#62B81E" stroke-width=".7"/><path d="M3.6,5.6 L6.4,2.8 M4.4,2.4 h2.2 v2.2" stroke="#EFFFE0" stroke-width="1.1" fill="none"/><path d="M7.6,15.6 L7.6,9 L8.8,8.8 L10.2,10.8 L12.4,6.4 C13.8,8.2 14.4,10 13.6,12 L14.6,15.6 Z" fill="#2D8CE4" stroke="#1A66C4" stroke-width=".7"/></svg>
<svg style="left:373.9px;top:317px" width="13.86" height="13.86" viewBox="0 0 16 16"><path d="M5.4,7.2 C8.4,2.8 14.4,5 13,10 C12.4,12.2 10.8,13.6 8.8,14.4" fill="none" stroke="#3F78E0" stroke-width="2.7"/><polygon points="0.8,9.6 8.8,10 4.2,2" fill="#3F78E0"/></svg>
<svg style="left:400.69px;top:317px" width="13.86" height="13.86" viewBox="0 0 16 16"><path d="M5.7,1.2 h4.6 v4.5 h4.5 v4.6 h-4.5 v4.5 h-4.6 v-4.5 h-4.5 v-4.6 h4.5z" fill="#7AD23C" stroke="#3F9A1C" stroke-width="1.1"/><path d="M6.6,2.2 h2 v4.4 h-2z M2.2,6.6 h4.4 v1.6 h-4.4z" fill="#B8F088" opacity=".8"/></svg>
<svg style="left:421.23px;top:317px" width="13.86" height="13.86" viewBox="0 0 16 16"><rect x="1" y="1" width="7.5" height="3.4" fill="#8A8A8A"/><rect x="1" y="11.8" width="7.5" height="3.4" fill="#8A8A8A"/><rect x="6.2" y="5.8" width="9" height="4.6" fill="#8A8A8A"/><polygon points="0.6,8.1 4.4,5.2 4.4,11" fill="#8A8A8A"/><rect x="4" y="7.3" width="3" height="1.7" fill="#8A8A8A"/></svg>
<svg style="left:441.32px;top:317px" width="13.86" height="13.86" viewBox="0 0 16 16"><path d="M2,2.2 L14,13.8 M14,2.2 L2,13.8" stroke="#808080" stroke-width="3.6" stroke-linecap="butt"/></svg>
<svg style="left:461.15px;top:317px" width="13.86" height="13.86" viewBox="0 0 16 16"><rect x="1.2" y="1.6" width="14" height="12.6" fill="#4C82D6"/><rect x="0.6" y="1" width="14" height="12.6" fill="#FAFCFF" stroke="#5A90E0" stroke-width="1"/><path d="M4.2,3.6 h7 M4.2,5.6 h7 M4.2,9.2 h7 M4.2,11.2 h7" stroke="#3a3a44" stroke-width="1"/><path d="M3,7.4 h9.2" stroke="#1E5CC8" stroke-width="1.8"/><polygon points="1.2,7.4 4.6,4.6 4.6,10.2" fill="#1E5CC8"/><polygon points="14,7.4 10.6,4.6 10.6,10.2" fill="#1E5CC8"/></svg>
<svg style="left:489.99px;top:317px" width="13.86" height="13.86" viewBox="0 0 16 16"><circle cx="8" cy="8" r="7.7" fill="#3C9CBE"/><circle cx="8" cy="8" r="6.3" fill="url(#pg)"/><path d="M2.6,6.4 A5.8,5.8 0 0 1 13.4,6.4 A9,9 0 0 0 2.6,6.4Z" fill="#fff" opacity=".35"/><polygon points="5.5,3.6 12.6,8 5.5,12.4" fill="#fff"/></svg>
<div class="a " style="left:393.55px;top:315.21px;width:2px;height:17.86px;border-left:1px solid #808080;border-right:1px solid #fff;"></div>
<div class="a " style="left:482.31px;top:315.21px;width:2px;height:17.86px;border-left:1px solid #808080;border-right:1px solid #fff;"></div>
<svg style="left:0;top:0" width="841" height="700"><polygon points="509.8,323.7 514.2,323.7 512,326.4" fill="#000"/></svg>
<div class="a " style="left:520.5px;top:317px;width:15.5px;height:14.5px;background:#C6C8D0;"></div>
<svg style="left:521px;top:317.2px" width="14.4" height="14.4" viewBox="0 0 16 16"><path d="M3.6,1.6 h2.6 l1.2,4 h1.2 l1.2,-4 h2.6 l2.6,9.4 v3.8 h-5.2 v-5.6 h-1.6 v5.6 h-5.2 v-3.8z" fill="#0c0c0c"/><path d="M6.2,1.6 l.9,3 M9.8,1.6 l-.9,3" stroke="#0c0c0c" stroke-width="1.4"/><rect x="2.2" y="11" width="1.2" height="2.2" fill="#e8e8e8"/><rect x="10.6" y="11" width="1.2" height="2.2" fill="#e8e8e8"/><rect x="4.3" y="4.6" width="1" height="1.6" fill="#d0d0d0"/><rect x="10.7" y="4.6" width="1" height="1.6" fill="#d0d0d0"/></svg>
<svg style="left:0;top:0" width="841" height="700"><polygon points="542.3,323.7 546.7,323.7 544.5,326.4" fill="#000"/></svg>
<div class="a " style="left:554.5px;top:316px;width:2px;height:17px;border-left:1px solid #808080;border-right:1px solid #fff;"></div>
<svg style="left:560.5px;top:317px" width="14.4" height="14.4" viewBox="0 0 16 16"><path d="M3,0.5 h7.5 l3.5,3.5 v11.5 h-11z" fill="#FDFDFD" stroke="#C8C8C8" stroke-width=".7"/><path d="M10.5,0.5 v3.5 h3.5z" fill="#E4E4E4" stroke="#C8C8C8" stroke-width=".5"/><rect x="0.5" y="7" width="12.5" height="6.2" fill="#B7A44A"/></svg>
<div class="t" style="left:561.4px;top:321.62px;font-size:7.38px;letter-spacing:-0.79px;font-weight:bold;color:#fff;">xml</div>
<div class="a sunk" style="left:309.5px;top:335.5px;width:425px;height:55px;background:#848284;"></div>
<div class="a " style="left:311px;top:336.5px;width:417px;height:44.9px;background:#fff;border:solid #000;border-width:1.5px 1px 1px 1.5px;"></div>
<div class="a hd" style="left:313px;top:338px;width:11.5px;height:14px;"></div>
<div class="a hd" style="left:324.5px;top:338px;width:48px;height:14px;"></div>
<div class="t" style="left:328px;top:341.93px;font-size:10.36px;letter-spacing:-0.74px;">qty</div>
<div class="a hd" style="left:372.5px;top:338px;width:30px;height:14px;"></div>
<div class="t" style="left:376px;top:341.93px;font-size:10.36px;letter-spacing:-1.06px;">uom</div>
<div class="a hd" style="left:402.5px;top:338px;width:97px;height:14px;"></div>
<div class="t" style="left:406px;top:341.93px;font-size:10.36px;letter-spacing:-0.87px;">item</div>
<div class="a hd" style="left:499.5px;top:338px;width:48px;height:14px;"></div>
<div class="t" style="left:503px;top:341.93px;font-size:10.36px;letter-spacing:-0.56px;">price</div>
<div class="a hd" style="left:547.5px;top:338px;width:28.5px;height:14px;"></div>
<div class="t" style="left:551px;top:341.93px;font-size:10.36px;letter-spacing:-0.59px;">disc</div>
<div class="a hd" style="left:576px;top:338px;width:48px;height:14px;"></div>
<div class="t" style="left:579.5px;top:341.93px;font-size:10.36px;letter-spacing:-0.57px;">extend</div>
<div class="a hd" style="left:624px;top:338px;width:47.5px;height:14px;"></div>
<div class="t" style="left:627.5px;top:341.93px;font-size:10.36px;letter-spacing:-0.36px;">calc</div>
<div class="a hd" style="left:671.5px;top:338px;width:55.5px;height:14px;"></div>
<div class="t" style="left:675px;top:341.93px;font-size:10.36px;letter-spacing:-0.62px;">rowCheck</div>
<div class="a hd" style="left:313px;top:352px;width:11.5px;height:14.2px;"></div>
<div class="a " style="left:324.5px;top:365.2px;width:402.5px;height:1px;background:#C6C6C0;"></div>
<div class="t" style="left:336.78px;top:355.43px;font-size:10.36px;letter-spacing:-0.5px;">28.5000</div>
<div class="t" style="left:375.5px;top:355.43px;font-size:10.36px;letter-spacing:-1.01px;">yd</div>
<div class="t" style="left:405.5px;top:355.43px;font-size:10.36px;letter-spacing:-0.53px;">SEFLE719555W-50</div>
<div class="t" style="left:511.78px;top:355.43px;font-size:10.36px;letter-spacing:-0.39px;">11.0073</div>
<div class="t" style="left:593.64px;top:355.43px;font-size:10.36px;letter-spacing:-0.52px;">313.71</div>
<div class="t" style="left:641.14px;top:355.43px;font-size:10.36px;letter-spacing:-0.52px;">313.71</div>
<div class="t" style="left:674.5px;top:355.43px;font-size:10.36px;letter-spacing:-0.85px;">Pass</div>
<div class="a hd" style="left:313px;top:366.2px;width:11.5px;height:14.2px;"></div>
<div class="a " style="left:324.5px;top:379.4px;width:402.5px;height:1px;background:#C6C6C0;"></div>
<div class="t" style="left:336.78px;top:369.63px;font-size:10.36px;letter-spacing:-0.5px;">25.0000</div>
<div class="t" style="left:375.5px;top:369.63px;font-size:10.36px;letter-spacing:-1.01px;">yd</div>
<div class="t" style="left:405.5px;top:369.63px;font-size:10.36px;letter-spacing:-0.53px;">SEFLE738034Y-60</div>
<div class="t" style="left:511.78px;top:369.63px;font-size:10.36px;letter-spacing:-0.5px;">41.0372</div>
<div class="t" style="left:588.28px;top:369.63px;font-size:10.36px;letter-spacing:-0.5px;">1025.93</div>
<div class="t" style="left:635.78px;top:369.63px;font-size:10.36px;letter-spacing:-0.5px;">1025.93</div>
<div class="t" style="left:674.5px;top:369.63px;font-size:10.36px;letter-spacing:-0.85px;">Pass</div>
<div class="a " style="left:372px;top:352px;width:1px;height:28.4px;background:#C6C6C0;"></div>
<div class="a " style="left:402px;top:352px;width:1px;height:28.4px;background:#C6C6C0;"></div>
<div class="a " style="left:499px;top:352px;width:1px;height:28.4px;background:#C6C6C0;"></div>
<div class="a " style="left:547px;top:352px;width:1px;height:28.4px;background:#C6C6C0;"></div>
<div class="a " style="left:575.5px;top:352px;width:1px;height:28.4px;background:#C6C6C0;"></div>
<div class="a " style="left:623.5px;top:352px;width:1px;height:28.4px;background:#C6C6C0;"></div>
<div class="a " style="left:671px;top:352px;width:1px;height:28.4px;background:#C6C6C0;"></div>
<div class="a sunk" style="left:739px;top:336px;width:45.5px;height:53.5px;background:#fff;"></div>
<div class="t" style="left:742.2px;top:347.66px;font-size:10.8px;letter-spacing:-0.2px;color:#666;">SEFL</div>
<div class="a dith" style="left:769.5px;top:338.5px;width:13px;height:36.5px;"></div>
<div class="a win" style="left:769.5px;top:338.8px;width:12.8px;height:12.2px;"></div>
<svg class="a" style="left:0;top:0" width="841" height="700"><polygon points="772.9,346.4 778.9,346.4 775.9,342.9" fill="#000"/></svg>
<div class="a win" style="left:769.5px;top:351.2px;width:12.8px;height:8px;"></div>
<div class="a win" style="left:769.5px;top:360.2px;width:12.8px;height:14px;"></div>
<svg class="a" style="left:0;top:0" width="841" height="700"><polygon points="772.9,365.7 778.9,365.7 775.9,369.2" fill="#000"/></svg>
<div class="a face" style="left:741px;top:375px;width:41.5px;height:13px;"></div>
<div class="a win" style="left:740.5px;top:375.2px;width:14px;height:13px;"></div>
<svg class="a" style="left:0;top:0" width="841" height="700"><polygon points="749,378.7 749,384.7 745.5,381.7" fill="#000"/></svg>
<div class="a win" style="left:754.6px;top:375.2px;width:14.2px;height:13px;"></div>
<svg class="a" style="left:0;top:0" width="841" height="700"><polygon points="760.2,378.7 760.2,384.7 763.7,381.7" fill="#000"/></svg>
<div class="a " style="left:261px;top:5px;width:158px;height:158px;background:#fff;border:3.3px solid #FFFF00;"></div>
<div class="a" style="left:264.3px;top:150px;width:151px;height:9.5px;overflow:hidden;color:#222;font-size:11px"><div class="t" style="left:2px;top:7.6px;letter-spacing:.2px">110073 &#160; &#160; &#160; &#160; &#160; &#160; &#160; &#160; &#160; &#160;110073 &#160; &#160;110073</div></div>
<div class="a face" style="left:264.3px;top:8.3px;width:151.5px;height:26px;border-top:1.2px solid #808080;box-shadow:inset 0 1px 0 #fff;"></div>
<div class="a " style="left:266.5px;top:11.5px;width:21px;height:21px;border:1px solid;border-color:#fff #808080 #808080 #fff;"></div>
<div class="a " style="left:287.5px;top:11.5px;width:13px;height:21px;border:1px solid;border-color:#808080 #fff #fff #808080;"></div>
<svg style="left:269px;top:14px" width="16" height="16" viewBox="0 0 16 16"><circle cx="8" cy="8" r="7.7" fill="#3C9CBE"/><circle cx="8" cy="8" r="6.3" fill="url(#pg)"/><path d="M2.6,6.4 A5.8,5.8 0 0 1 13.4,6.4 A9,9 0 0 0 2.6,6.4Z" fill="#fff" opacity=".35"/><polygon points="5.5,3.6 12.6,8 5.5,12.4" fill="#fff"/></svg>
<svg style="left:0;top:0" width="841" height="700"><polygon points="293.2,22.2 298.4,22.2 295.8,25.3" fill="#000"/></svg>
<div class="a " style="left:304px;top:13.5px;width:18px;height:16px;background:#C4C6CE;"></div>
<svg style="left:304.5px;top:13.5px" width="16.48" height="16.48" viewBox="0 0 16 16"><path d="M3.6,1.6 h2.6 l1.2,4 h1.2 l1.2,-4 h2.6 l2.6,9.4 v3.8 h-5.2 v-5.6 h-1.6 v5.6 h-5.2 v-3.8z" fill="#0c0c0c"/><path d="M6.2,1.6 l.9,3 M9.8,1.6 l-.9,3" stroke="#0c0c0c" stroke-width="1.4"/><rect x="2.2" y="11" width="1.2" height="2.2" fill="#e8e8e8"/><rect x="10.6" y="11" width="1.2" height="2.2" fill="#e8e8e8"/><rect x="4.3" y="4.6" width="1" height="1.6" fill="#d0d0d0"/><rect x="10.7" y="4.6" width="1" height="1.6" fill="#d0d0d0"/></svg>
<svg style="left:0;top:0" width="841" height="700"><polygon points="327.9,21.7 333.1,21.7 330.5,24.8" fill="#000"/></svg>
<div class="a " style="left:340.3px;top:12px;width:2px;height:20px;border-left:1px solid #808080;border-right:1px solid #fff;"></div>
<svg style="left:348.5px;top:13.8px" width="16" height="16" viewBox="0 0 16 16"><path d="M3,0.5 h7.5 l3.5,3.5 v11.5 h-11z" fill="#FDFDFD" stroke="#C8C8C8" stroke-width=".7"/><path d="M10.5,0.5 v3.5 h3.5z" fill="#E4E4E4" stroke="#C8C8C8" stroke-width=".5"/><rect x="0.5" y="7" width="12.5" height="6.2" fill="#B7A44A"/></svg>
<div class="t" style="left:349.5px;top:18.96px;font-size:8.2px;letter-spacing:-0.88px;font-weight:bold;color:#fff;">xml</div>
<div class="a win" style="left:266px;top:33.5px;width:150px;height:121.5px;"></div>
<div class="t" style="left:285.8px;top:39.35px;font-size:11.4px;letter-spacing:-0.58px;color:#111;">GridMath</div>
<div class="t" style="left:285.8px;top:55.85px;font-size:11.4px;letter-spacing:-0.51px;color:#111;">RowFailCount</div>
<div class="t" style="left:285.8px;top:72.85px;font-size:11.4px;letter-spacing:-0.29px;color:#111;">ExtendTotalCheck</div>
<div class="t" style="left:285.8px;top:89.65px;font-size:11.4px;letter-spacing:-0.8px;color:#111;">GridFmt_MR</div>
<div class="t" style="left:285.8px;top:106.85px;font-size:11.4px;letter-spacing:-0.52px;color:#111;">Del_ItemRows_</div>
<div class="t" style="left:285.8px;top:123.85px;font-size:11.4px;letter-spacing:-0.72px;color:#111;">GridFmt_</div>
<div class="t" style="left:285.8px;top:140.65px;font-size:11.4px;letter-spacing:-0.74px;color:#111;">Format_</div>
<div class="blur" style="left:361px;top:106px;width:33px;height:11px;background:linear-gradient(90deg,#b4b2ac,#9a9892 16%,#b8b5af 30%,#93918c 46%,#b0aea8 62%,#96948f 80%,#aaa8a2)"></div>
<div class="blur" style="left:329px;top:123px;width:33px;height:11px;background:linear-gradient(90deg,#b4b2ac,#9a9892 16%,#b8b5af 30%,#93918c 46%,#b0aea8 62%,#96948f 80%,#aaa8a2)"></div>
<div class="blur" style="left:325px;top:140px;width:27px;height:11px;background:linear-gradient(90deg,#b4b2ac,#9a9892 16%,#b8b5af 30%,#93918c 46%,#b0aea8 62%,#96948f 80%,#aaa8a2)"></div>
<svg style="left:0;top:0" width="841" height="700"><defs><filter id="ash" x="-20%" y="-20%" width="140%" height="140%"><feDropShadow dx="3" dy="2.5" stdDeviation="1.8" flood-color="#000" flood-opacity=".5"/></filter><filter id="bsh" x="-30%" y="-30%" width="160%" height="160%"><feDropShadow dx="1.5" dy="2.5" stdDeviation="2.5" flood-color="#000" flood-opacity=".6"/></filter><linearGradient id="ring" x1="0" y1="0" x2="1" y2="1"><stop offset="0" stop-color="#ffffff"/><stop offset=".55" stop-color="#f2f2f2"/><stop offset="1" stop-color="#c4c4c4"/></linearGradient><linearGradient id="disc" x1="0" y1="0" x2=".6" y2="1"><stop offset="0" stop-color="#3c3c3c"/><stop offset=".5" stop-color="#1a1a1a"/><stop offset="1" stop-color="#0c0c0c"/></linearGradient><linearGradient id="dig" x1="0" y1="0" x2="0" y2="1"><stop offset=".17" stop-color="#fafafa"/><stop offset=".728" stop-color="#d8d8d8"/><stop offset=".742" stop-color="#8e8e8e"/><stop offset=".82" stop-color="#a2a2a2"/></linearGradient></defs><path d="M603.11,477.7 L600.97,477.53 L598.5,477.36 L595.71,477.18 L592.63,476.98 L589.28,476.77 L585.68,476.54 L581.85,476.3 L577.81,476.04 L573.57,475.76 L569.16,475.47 L564.59,475.17 L559.89,474.85 L555.08,474.51 L550.17,474.15 L545.19,473.78 L540.15,473.4 L534.94,473 L529.44,472.61 L523.69,472.21 L517.74,471.8 L511.6,471.38 L505.31,470.95 L498.9,470.5 L492.41,470.03 L485.87,469.53 L479.3,469 L472.75,468.43 L466.25,467.83 L459.82,467.19 L453.5,466.5 L447.32,465.77 L441.32,464.98 L435.42,464.13 L429.54,463.22 L423.69,462.26 L417.87,461.25 L412.07,460.2 L406.3,459.11 L400.56,457.99 L394.86,456.84 L389.19,455.66 L383.55,454.46 L377.95,453.25 L372.39,452.03 L366.87,450.81 L361.38,449.58 L355.94,448.36 L350.55,447.15 L345.15,445.92 L339.68,444.66 L334.18,443.36 L328.66,442.04 L323.15,440.7 L317.66,439.35 L312.24,437.98 L306.89,436.62 L301.64,435.27 L296.52,433.92 L291.55,432.6 L286.75,431.29 L282.15,430.02 L277.76,428.79 L273.62,427.6 L269.75,426.46 L266.17,425.37 L262.86,424.33 L259.79,423.32 L256.94,422.35 L254.28,421.4 L251.8,420.48 L249.47,419.58 L247.26,418.69 L245.15,417.82 L243.11,416.95 L241.13,416.07 L239.17,415.19 L237.21,414.3 L235.23,413.4 L233.2,412.48 L231.12,411.53 L229.03,410.57 L226.97,409.59 L224.93,408.59 L222.92,407.57 L220.94,406.54 L219,405.51 L217.09,404.48 L215.23,403.45 L213.42,402.44 L211.65,401.44 L209.94,400.46 L208.29,399.51 L206.71,398.6 L205.18,397.72 L203.73,396.89 L202.36,396.1 L201.1,395.38 L199.96,394.72 L198.92,394.11 L197.96,393.54 L197.08,393 L196.27,392.5 L195.51,392.01 L194.79,391.55 L194.1,391.09 L193.42,390.64 L192.75,390.19 L192.06,389.73 L191.36,389.25 L190.63,388.76 L189.86,388.24 L189.04,387.68 L188.18,387.12 L187.32,386.56 L186.46,385.99 L185.61,385.43 L184.75,384.87 L183.89,384.3 L183.04,383.74 L182.2,383.17 L181.36,382.6 L180.53,382.02 L179.71,381.44 L178.9,380.85 L178.1,380.26 L177.31,379.66 L176.54,379.06 L175.78,378.44 L175.03,377.81 L174.28,377.16 L173.53,376.49 L172.78,375.81 L172.03,375.11 L171.3,374.41 L170.56,373.7 L169.84,372.98 L169.12,372.26 L168.41,371.54 L167.7,370.82 L167.01,370.1 L166.33,369.38 L165.67,368.67 L165.01,367.97 L164.37,367.28 L163.74,366.6 L163.14,365.95 L162.55,365.3 L161.99,364.67 L161.43,364.05 L160.9,363.43 L160.37,362.82 L159.85,362.21 L159.34,361.59 L158.84,360.97 L158.34,360.34 L157.85,359.69 L157.35,359.03 L156.85,358.34 L156.35,357.63 L155.85,356.9 L155.33,356.13 L154.8,355.32 L154.26,354.47 L153.71,353.59 L153.16,352.68 L152.61,351.76 L152.06,350.83 L151.52,349.89 L150.99,348.96 L150.48,348.04 L149.98,347.13 L149.5,346.24 L149.05,345.38 L148.63,344.56 L148.23,343.78 L147.87,343.04 L147.54,342.35 L147.23,341.71 L146.95,341.12 L146.7,340.57 L146.48,340.06 L146.28,339.58 L146.09,339.13 L145.93,338.69 L145.78,338.26 L145.65,337.82 L145.52,337.36 L145.4,336.88 L145.28,336.37 L145.16,335.81 L145.05,335.2 L144.94,334.55 L144.84,333.85 L144.75,333.09 L144.67,332.26 L144.6,331.37 L144.55,330.45 L144.5,329.49 L144.46,328.52 L144.43,327.54 L144.4,326.56 L144.38,325.59 L144.36,324.65 L144.35,323.74 L144.34,322.87 L144.32,322.06 L144.31,321.3 L144.29,320.63 L144.28,320.03 L144.27,319.5 L144.27,319.01 L144.27,318.55 L144.27,318.13 L144.28,317.75 L144.29,317.4 L144.3,317.07 L144.31,316.77 L144.33,316.49 L144.34,316.23 L144.36,315.98 L144.37,315.75 L144.38,315.52 L144.39,315.28 L144.4,315.08 L153.2,319.1 L150.6,291.8 L130,310.4 L138.6,314.92 L138.6,315.08 L138.59,315.25 L138.58,315.44 L138.57,315.66 L138.56,315.91 L138.54,316.19 L138.53,316.5 L138.51,316.84 L138.5,317.21 L138.49,317.62 L138.48,318.05 L138.48,318.52 L138.48,319.03 L138.48,319.57 L138.49,320.16 L138.51,320.77 L138.53,321.43 L138.54,322.16 L138.56,322.97 L138.57,323.84 L138.59,324.75 L138.61,325.71 L138.63,326.7 L138.66,327.71 L138.7,328.74 L138.74,329.76 L138.79,330.78 L138.86,331.78 L138.94,332.75 L139.03,333.7 L139.14,334.6 L139.26,335.45 L139.39,336.22 L139.53,336.93 L139.67,337.6 L139.82,338.24 L139.98,338.86 L140.15,339.46 L140.33,340.05 L140.53,340.62 L140.74,341.19 L140.97,341.76 L141.22,342.34 L141.48,342.93 L141.76,343.53 L142.06,344.17 L142.38,344.84 L142.73,345.56 L143.12,346.34 L143.54,347.17 L143.99,348.04 L144.46,348.93 L144.97,349.86 L145.49,350.8 L146.02,351.76 L146.58,352.73 L147.14,353.7 L147.71,354.67 L148.29,355.63 L148.87,356.58 L149.45,357.5 L150.02,358.4 L150.59,359.27 L151.15,360.1 L151.7,360.89 L152.25,361.66 L152.79,362.4 L153.33,363.12 L153.87,363.82 L154.41,364.51 L154.96,365.18 L155.51,365.84 L156.06,366.5 L156.63,367.15 L157.2,367.8 L157.78,368.44 L158.37,369.1 L158.97,369.76 L159.59,370.43 L160.23,371.12 L160.89,371.82 L161.56,372.54 L162.24,373.26 L162.94,374 L163.66,374.74 L164.39,375.48 L165.13,376.23 L165.88,376.98 L166.64,377.73 L167.41,378.47 L168.19,379.21 L168.98,379.94 L169.78,380.66 L170.59,381.38 L171.4,382.08 L172.22,382.76 L173.05,383.43 L173.89,384.09 L174.74,384.74 L175.6,385.37 L176.46,385.99 L177.33,386.6 L178.2,387.2 L179.08,387.79 L179.95,388.38 L180.82,388.95 L181.69,389.52 L182.56,390.09 L183.42,390.65 L184.28,391.21 L185.13,391.76 L185.96,392.32 L186.77,392.85 L187.53,393.36 L188.26,393.85 L188.96,394.32 L189.65,394.79 L190.34,395.25 L191.05,395.72 L191.77,396.19 L192.53,396.68 L193.33,397.18 L194.19,397.71 L195.11,398.27 L196.1,398.86 L197.18,399.49 L198.36,400.17 L199.64,400.9 L201,401.67 L202.45,402.49 L203.97,403.36 L205.56,404.28 L207.22,405.23 L208.95,406.21 L210.74,407.21 L212.58,408.24 L214.48,409.28 L216.42,410.32 L218.41,411.37 L220.44,412.42 L222.51,413.46 L224.61,414.49 L226.74,415.49 L228.88,416.47 L230.97,417.41 L232.99,418.32 L234.98,419.22 L236.96,420.11 L238.95,421 L240.98,421.89 L243.07,422.77 L245.24,423.67 L247.51,424.57 L249.92,425.49 L252.47,426.43 L255.19,427.39 L258.1,428.38 L261.24,429.39 L264.61,430.45 L268.25,431.54 L272.16,432.68 L276.33,433.86 L280.74,435.09 L285.37,436.35 L290.2,437.65 L295.2,438.96 L300.34,440.3 L305.61,441.64 L310.98,442.99 L316.43,444.34 L321.93,445.68 L327.47,447.01 L333.01,448.31 L338.54,449.59 L344.03,450.84 L349.45,452.05 L354.85,453.25 L360.3,454.45 L365.79,455.66 L371.33,456.87 L376.91,458.08 L382.53,459.27 L388.19,460.45 L393.89,461.61 L399.63,462.75 L405.4,463.86 L411.2,464.93 L417.04,465.97 L422.91,466.96 L428.81,467.9 L434.73,468.79 L440.68,469.62 L446.75,470.4 L452.98,471.11 L459.35,471.78 L465.82,472.4 L472.36,472.98 L478.94,473.51 L485.53,474.01 L492.09,474.48 L498.6,474.93 L505.01,475.35 L511.31,475.75 L517.45,476.13 L523.41,476.51 L529.15,476.88 L534.64,477.24 L539.85,477.6 L544.89,477.96 L549.88,478.3 L554.8,478.63 L559.62,478.93 L564.33,479.22 L568.9,479.49 L573.32,479.75 L577.57,479.99 L581.62,480.21 L585.46,480.42 L589.06,480.61 L592.41,480.78 L595.49,480.94 L598.28,481.08 L600.75,481.2 L602.89,481.3Z" fill="#FF0000" filter="url(#ash)"/><path d="M381.61,241.51 L383.31,241.02 L385.33,240.43 L387.63,239.75 L390.18,238.99 L392.96,238.16 L395.95,237.27 L399.1,236.32 L402.4,235.34 L405.82,234.32 L409.32,233.28 L412.89,232.23 L416.49,231.17 L420.09,230.11 L423.67,229.07 L427.2,228.05 L430.66,227.06 L434.17,226.06 L437.86,225 L441.7,223.9 L445.66,222.76 L449.7,221.6 L453.8,220.43 L457.91,219.26 L462.02,218.1 L466.08,216.96 L470.06,215.86 L473.94,214.8 L477.68,213.8 L481.24,212.86 L484.6,212.01 L487.72,211.25 L490.57,210.59 L493.17,210.02 L495.58,209.54 L497.81,209.12 L499.88,208.78 L501.81,208.49 L503.6,208.26 L505.27,208.08 L506.84,207.94 L508.32,207.83 L509.73,207.75 L511.09,207.69 L512.41,207.65 L513.7,207.62 L514.99,207.59 L516.28,207.56 L517.58,207.52 L518.81,207.49 L519.95,207.48 L521.01,207.49 L522,207.52 L522.93,207.57 L523.79,207.64 L524.61,207.72 L525.38,207.82 L526.11,207.93 L526.82,208.06 L527.49,208.2 L528.16,208.36 L528.81,208.53 L529.46,208.72 L530.11,208.92 L530.79,209.13 L531.46,209.35 L532.11,209.57 L532.71,209.77 L533.26,209.98 L533.78,210.18 L534.25,210.38 L534.68,210.59 L535.08,210.81 L535.45,211.04 L535.79,211.28 L536.11,211.55 L536.43,211.85 L536.74,212.19 L537.05,212.58 L537.36,213.03 L537.67,213.53 L537.97,214.1 L538.27,214.77 L538.57,215.51 L538.86,216.33 L539.14,217.22 L539.4,218.16 L539.66,219.14 L539.9,220.17 L540.13,221.22 L540.35,222.29 L540.55,223.37 L540.75,224.45 L540.93,225.54 L541.1,226.61 L541.25,227.66 L541.4,228.68 L541.53,229.68 L541.66,230.69 L541.76,231.7 L541.86,232.72 L541.94,233.74 L542.01,234.77 L542.07,235.8 L542.11,236.82 L542.14,237.85 L542.16,238.86 L542.16,239.88 L542.14,240.88 L542.12,241.87 L542.07,242.86 L542.02,243.82 L541.94,244.77 L541.85,245.68 L541.74,246.57 L541.6,247.45 L541.44,248.33 L541.26,249.21 L541.07,250.1 L540.86,250.98 L540.64,251.87 L540.41,252.77 L540.18,253.68 L539.93,254.59 L539.69,255.53 L539.45,256.47 L539.21,257.44 L538.98,258.42 L538.76,259.41 L538.55,260.42 L538.33,261.45 L538.1,262.52 L537.87,263.61 L537.63,264.72 L537.4,265.83 L537.16,266.95 L536.93,268.05 L536.7,269.14 L536.48,270.19 L536.27,271.21 L536.07,272.19 L535.88,273.11 L535.71,273.97 L535.55,274.76 L535.41,275.47 L535.29,276.11 L535.18,276.7 L535.09,277.23 L535.02,277.71 L534.95,278.14 L534.9,278.53 L534.85,278.88 L534.81,279.19 L534.78,279.47 L534.76,279.72 L534.74,279.94 L534.73,280.13 L534.71,280.28 L534.7,280.41 L534.69,280.51 L534.67,280.64 L525.7,279.3 L532.4,305 L549.5,283.1 L540.33,281.36 L540.35,281.18 L540.37,280.97 L540.39,280.78 L540.4,280.59 L540.42,280.41 L540.43,280.23 L540.45,280.03 L540.47,279.81 L540.5,279.56 L540.54,279.27 L540.58,278.95 L540.64,278.58 L540.7,278.15 L540.78,277.67 L540.88,277.13 L540.99,276.53 L541.12,275.84 L541.27,275.07 L541.44,274.22 L541.62,273.31 L541.81,272.35 L542.02,271.33 L542.23,270.28 L542.46,269.2 L542.68,268.1 L542.91,266.99 L543.14,265.87 L543.37,264.76 L543.6,263.67 L543.82,262.6 L544.04,261.57 L544.24,260.59 L544.44,259.65 L544.65,258.74 L544.87,257.83 L545.1,256.91 L545.34,256 L545.57,255.08 L545.81,254.15 L546.05,253.22 L546.27,252.27 L546.49,251.32 L546.7,250.35 L546.9,249.36 L547.07,248.35 L547.23,247.33 L547.36,246.29 L547.46,245.23 L547.53,244.18 L547.59,243.12 L547.63,242.06 L547.66,240.98 L547.66,239.9 L547.66,238.81 L547.64,237.71 L547.6,236.62 L547.55,235.52 L547.48,234.42 L547.4,233.32 L547.31,232.23 L547.2,231.14 L547.08,230.05 L546.95,228.98 L546.8,227.92 L546.64,226.86 L546.47,225.77 L546.29,224.65 L546.1,223.52 L545.89,222.38 L545.67,221.23 L545.43,220.08 L545.17,218.95 L544.9,217.83 L544.61,216.73 L544.3,215.65 L543.96,214.61 L543.6,213.61 L543.21,212.65 L542.79,211.73 L542.33,210.87 L541.85,210.08 L541.34,209.36 L540.81,208.7 L540.24,208.09 L539.65,207.53 L539.04,207.03 L538.41,206.59 L537.77,206.19 L537.12,205.84 L536.46,205.52 L535.8,205.24 L535.14,204.98 L534.47,204.74 L533.8,204.52 L533.12,204.29 L532.41,204.07 L531.69,203.84 L530.94,203.62 L530.19,203.41 L529.42,203.21 L528.64,203.03 L527.82,202.86 L526.98,202.71 L526.11,202.58 L525.2,202.47 L524.25,202.38 L523.25,202.31 L522.2,202.26 L521.1,202.23 L519.94,202.22 L518.71,202.24 L517.42,202.28 L516.13,202.32 L514.86,202.36 L513.57,202.39 L512.25,202.43 L510.88,202.48 L509.46,202.55 L507.97,202.64 L506.4,202.76 L504.73,202.93 L502.97,203.13 L501.08,203.38 L499.07,203.69 L496.91,204.06 L494.59,204.51 L492.1,205.02 L489.43,205.61 L486.53,206.31 L483.36,207.1 L479.97,207.98 L476.38,208.95 L472.62,209.98 L468.73,211.06 L464.74,212.2 L460.67,213.36 L456.56,214.55 L452.45,215.75 L448.35,216.95 L444.32,218.14 L440.36,219.3 L436.53,220.43 L432.85,221.51 L429.34,222.54 L425.89,223.55 L422.36,224.6 L418.77,225.67 L415.17,226.75 L411.57,227.84 L408.01,228.93 L404.51,230 L401.1,231.05 L397.81,232.06 L394.66,233.04 L391.69,233.96 L388.91,234.82 L386.37,235.62 L384.08,236.33 L382.08,236.96 L380.39,237.49Z" fill="#FF0000" filter="url(#ash)"/><path d="M247.1,143.3 L246.73,142.45 L246.28,141.41 L245.75,140.22 L245.16,138.88 L244.52,137.43 L243.83,135.87 L243.11,134.23 L242.36,132.54 L241.6,130.8 L240.84,129.05 L240.07,127.3 L239.32,125.57 L238.59,123.89 L237.9,122.27 L237.24,120.74 L236.64,119.31 L236.08,117.97 L235.55,116.69 L235.05,115.45 L234.56,114.25 L234.09,113.07 L233.63,111.92 L233.17,110.77 L232.72,109.63 L232.27,108.47 L231.81,107.3 L231.34,106.09 L230.85,104.85 L230.35,103.57 L229.82,102.22 L229.27,100.81 L228.68,99.33 L228.05,97.76 L227.37,96.11 L226.66,94.4 L225.91,92.65 L225.15,90.84 L224.37,89.01 L223.58,87.15 L222.8,85.27 L222.02,83.39 L221.26,81.51 L220.53,79.65 L219.82,77.81 L219.16,76 L218.54,74.24 L217.97,72.53 L217.47,70.88 L217.02,69.26 L216.6,67.63 L216.22,66 L215.86,64.38 L215.54,62.76 L215.25,61.16 L214.98,59.57 L214.73,58.01 L214.5,56.47 L214.3,54.96 L214.11,53.48 L213.94,52.05 L213.78,50.66 L213.63,49.32 L213.5,48.03 L213.37,46.8 L213.25,45.65 L213.15,44.56 L213.07,43.53 L213,42.55 L212.95,41.62 L212.92,40.73 L212.9,39.89 L212.9,39.08 L212.91,38.31 L212.94,37.56 L212.99,36.83 L213.05,36.12 L213.13,35.43 L213.22,34.74 L213.33,34.05 L213.46,33.36 L213.6,32.67 L213.75,32 L213.91,31.35 L214.09,30.73 L214.27,30.12 L214.47,29.54 L214.69,28.98 L214.92,28.44 L215.16,27.92 L215.42,27.43 L215.69,26.95 L215.99,26.49 L216.3,26.06 L216.62,25.64 L216.97,25.24 L217.35,24.84 L217.76,24.45 L218.17,24.06 L218.57,23.71 L218.97,23.38 L219.37,23.08 L219.77,22.79 L220.2,22.53 L220.65,22.28 L221.14,22.04 L221.68,21.82 L222.27,21.6 L222.92,21.4 L223.64,21.21 L224.44,21.03 L225.32,20.86 L226.27,20.7 L227.36,20.57 L228.63,20.46 L230.07,20.38 L231.64,20.31 L233.31,20.27 L235.05,20.25 L236.83,20.24 L238.62,20.24 L240.39,20.25 L242.12,20.27 L243.78,20.29 L245.33,20.32 L246.76,20.33 L248.04,20.35 L249.14,20.36 L250.01,20.35 L249.5,10.8 L263.8,19.2 L249.5,26 L249.99,16.45 L249.13,16.46 L248.07,16.45 L246.81,16.44 L245.38,16.43 L243.83,16.41 L242.16,16.39 L240.42,16.38 L238.63,16.37 L236.82,16.37 L235.01,16.39 L233.23,16.41 L231.51,16.46 L229.88,16.53 L228.36,16.62 L226.96,16.74 L225.73,16.9 L224.64,17.08 L223.65,17.27 L222.72,17.49 L221.85,17.72 L221.04,17.98 L220.28,18.25 L219.57,18.56 L218.9,18.88 L218.27,19.23 L217.67,19.6 L217.12,19.99 L216.59,20.39 L216.08,20.81 L215.6,21.24 L215.13,21.69 L214.65,22.16 L214.16,22.67 L213.68,23.22 L213.24,23.78 L212.82,24.37 L212.44,24.98 L212.08,25.6 L211.75,26.24 L211.44,26.9 L211.16,27.57 L210.9,28.25 L210.66,28.95 L210.45,29.66 L210.25,30.39 L210.06,31.13 L209.89,31.88 L209.74,32.64 L209.6,33.42 L209.48,34.19 L209.38,34.97 L209.29,35.76 L209.22,36.55 L209.17,37.37 L209.14,38.2 L209.13,39.05 L209.13,39.94 L209.15,40.85 L209.19,41.79 L209.24,42.78 L209.32,43.81 L209.41,44.89 L209.51,46.01 L209.63,47.2 L209.77,48.43 L209.91,49.73 L210.06,51.08 L210.22,52.49 L210.4,53.95 L210.6,55.45 L210.81,56.99 L211.05,58.57 L211.3,60.18 L211.59,61.81 L211.9,63.47 L212.24,65.14 L212.61,66.83 L213.01,68.52 L213.45,70.22 L213.93,71.92 L214.46,73.65 L215.05,75.43 L215.7,77.25 L216.38,79.1 L217.11,80.98 L217.86,82.88 L218.64,84.78 L219.43,86.68 L220.22,88.57 L221.02,90.43 L221.8,92.27 L222.57,94.07 L223.31,95.82 L224.02,97.5 L224.7,99.13 L225.32,100.67 L225.91,102.14 L226.46,103.55 L226.99,104.88 L227.5,106.17 L227.98,107.41 L228.46,108.61 L228.92,109.79 L229.38,110.95 L229.84,112.1 L230.3,113.25 L230.77,114.41 L231.24,115.59 L231.74,116.8 L232.25,118.05 L232.79,119.34 L233.36,120.69 L233.97,122.13 L234.63,123.67 L235.33,125.3 L236.07,126.99 L236.83,128.72 L237.6,130.47 L238.37,132.23 L239.14,133.96 L239.89,135.66 L240.61,137.29 L241.3,138.85 L241.95,140.3 L242.54,141.64 L243.07,142.83 L243.52,143.86 L243.9,144.7Z" fill="#05FA0A" filter="url(#ash)"/><ellipse cx="311.5" cy="94.6" rx="42.5" ry="8.6" fill="none" stroke="#FF0000" stroke-width="2.2" filter="url(#ash)"/><g filter="url(#bsh)"><circle cx="238.4" cy="409.1" r="35.2" fill="url(#ring)"/></g><circle cx="238.4" cy="409.1" r="30.87" fill="#9a9a9a"/><circle cx="238.4" cy="409.1" r="30.27" fill="url(#disc)"/><clipPath id="c238"><circle cx="238.4" cy="409.1" r="30.27"/></clipPath><g clip-path="url(#c238)"><path d="M267.16,395.48 A37.84,37.84 0 0 0 221.75,437.86 L202.07,439.37 L202.07,372.77 L268.67,372.77 Z" fill="#fff" opacity=".2"/></g><clipPath id="f238"><rect x="182.3" y="371.7" width="115" height="49.83"/></clipPath><linearGradient id="stemf238" x1="0" y1="0" x2="0" y2="1"><stop offset="0" stop-color="#dcdcdc"/><stop offset=".52" stop-color="#d8d8d8"/><stop offset=".56" stop-color="#8e8e8e"/><stop offset="1" stop-color="#a6a6a6"/></linearGradient><rect x="236.38" y="421.23" width="10.13" height="8.37" fill="url(#stemf238)"/><g clip-path="url(#f238)" style="opacity:.999"><text transform="translate(239.8,429.2) scale(1.2,1)" x="0" y="0" style="font-family:'Liberation Sans',sans-serif;font-weight:bold" font-size="57.5" text-anchor="middle" fill="url(#dig)" stroke="url(#dig)" stroke-width="0.81" stroke-linejoin="miter" paint-order="stroke">1</text></g><g clip-path="url(#c238)"><ellipse cx="239.8" cy="438.4" rx="15.53" ry="8.05" fill="#fff" opacity=".13"/></g><g filter="url(#bsh)"><circle cx="253.5" cy="57.7" r="23.6" fill="url(#ring)"/></g><circle cx="253.5" cy="57.7" r="20.9" fill="#9a9a9a"/><circle cx="253.5" cy="57.7" r="20.3" fill="url(#disc)"/><clipPath id="c253"><circle cx="253.5" cy="57.7" r="20.3"/></clipPath><g clip-path="url(#c253)"><path d="M272.78,48.57 A25.37,25.37 0 0 0 242.34,76.98 L229.14,78 L229.14,33.34 L273.8,33.34 Z" fill="#fff" opacity=".2"/></g><g style="opacity:.999"><text transform="translate(253.8,72.4) scale(1.06,1)" x="0" y="0" style="font-family:'Liberation Sans',sans-serif;font-weight:bold" font-size="40.6" text-anchor="middle" fill="url(#dig)" stroke="url(#dig)" stroke-width="0.57" stroke-linejoin="miter" paint-order="stroke">2</text></g><g clip-path="url(#c253)"><ellipse cx="253.8" cy="78.9" rx="10.96" ry="5.68" fill="#fff" opacity=".13"/></g><g filter="url(#bsh)"><circle cx="488.6" cy="277.2" r="31.4" fill="url(#ring)"/></g><circle cx="488.6" cy="277.2" r="27.6" fill="#9a9a9a"/><circle cx="488.6" cy="277.2" r="27" fill="url(#disc)"/><clipPath id="c488"><circle cx="488.6" cy="277.2" r="27"/></clipPath><g clip-path="url(#c488)"><path d="M514.25,265.05 A33.75,33.75 0 0 0 473.75,302.85 L456.2,304.2 L456.2,244.8 L515.6,244.8 Z" fill="#fff" opacity=".2"/></g><g style="opacity:.999"><text transform="translate(488.1,294.4) scale(1.05,1)" x="0" y="0" style="font-family:'Liberation Sans',sans-serif;font-weight:bold" font-size="51.4" text-anchor="middle" fill="url(#dig)" stroke="url(#dig)" stroke-width="0.72" stroke-linejoin="miter" paint-order="stroke">3</text></g><g clip-path="url(#c488)"><ellipse cx="488.1" cy="302.62" rx="13.88" ry="7.2" fill="#fff" opacity=".13"/></g></svg>
</div></body></html>
